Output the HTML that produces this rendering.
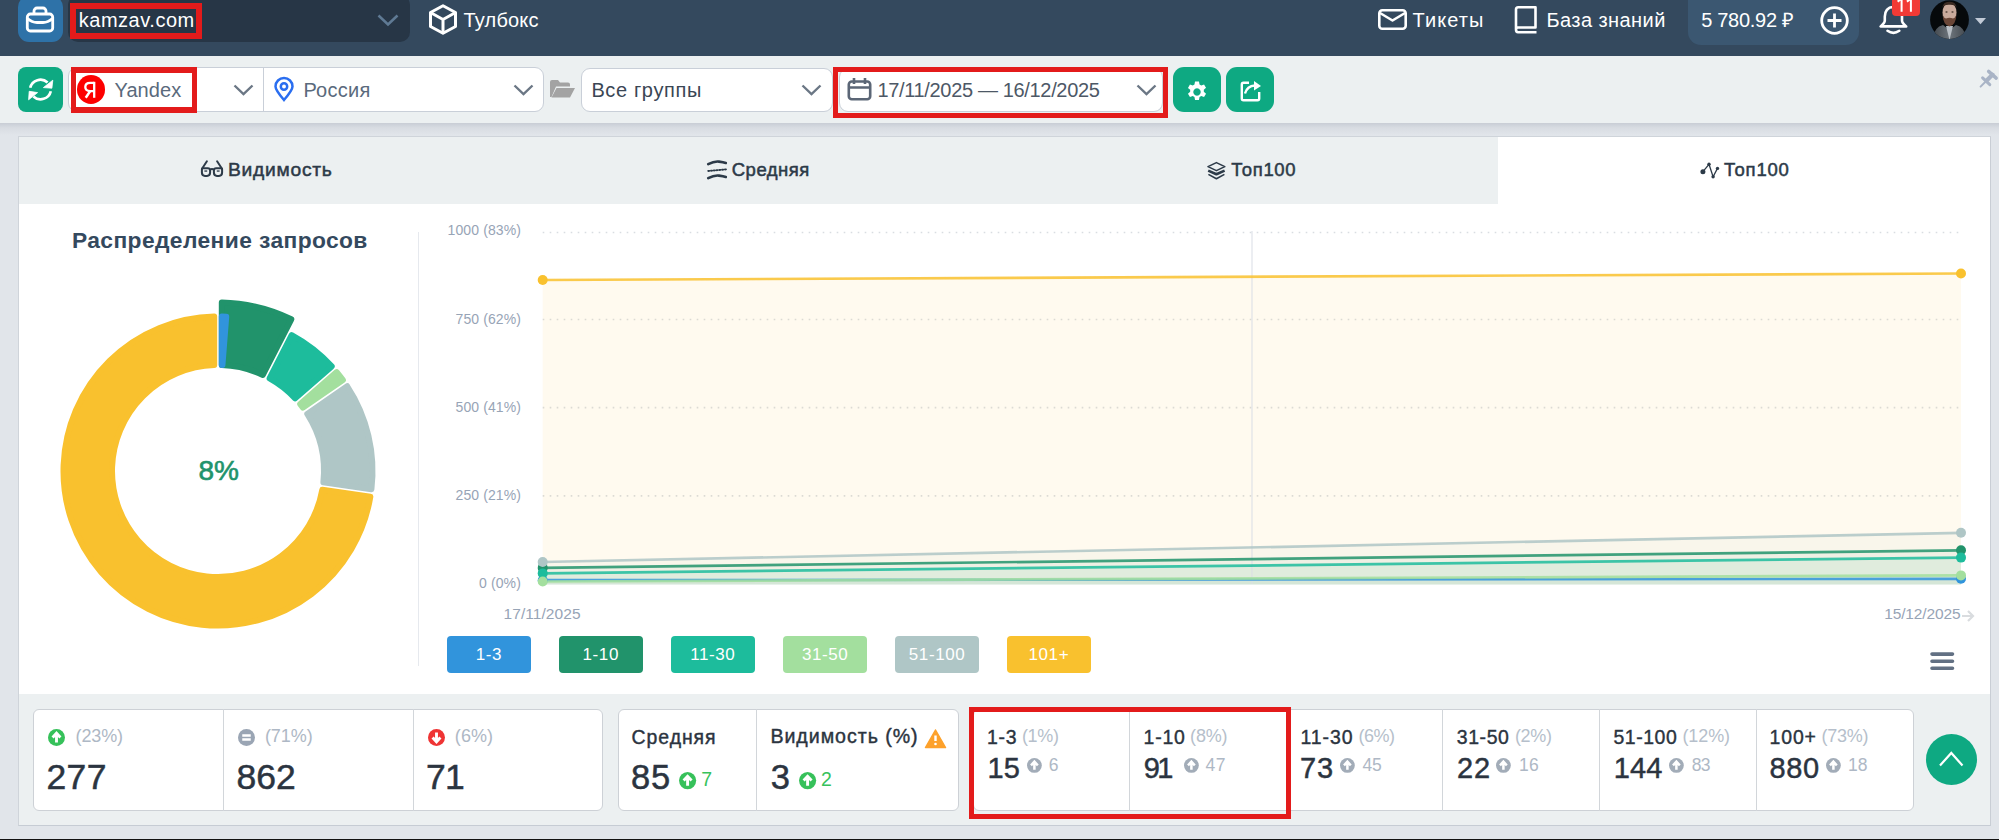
<!DOCTYPE html><html><head><meta charset="utf-8"><style>
html,body{margin:0;padding:0;width:1999px;height:840px;overflow:hidden;position:relative;font-family:"Liberation Sans", sans-serif}
.t{position:absolute;line-height:1;white-space:nowrap}
svg{display:block}
</style></head><body>
<div style="position:absolute;left:0px;top:0px;width:1999px;height:840px;background:#e1e5ea"></div><div style="position:absolute;left:0px;top:0px;width:1999px;height:56px;background:#34495e"></div><div style="position:absolute;left:18px;top:-4px;width:44.5px;height:46px;background:#2e72a8;border-radius:11px"></div><svg style="position:absolute;left:18px;top:0px;overflow:visible" width="44" height="42" viewBox="0 0 44 42"><g fill="none" stroke="#fff" stroke-width="2.8" stroke-linejoin="round" stroke-linecap="round"><rect x="9.3" y="14" width="25.4" height="17" rx="3"/><path d="M16 13.5v-2.5a3 3 0 0 1 3-3h6a3 3 0 0 1 3 3v2.5"/><path d="M9.5 18.5 Q14 22.5 19 22.5 H25 Q30 22.5 34.5 18.5"/></g></svg><div style="position:absolute;left:68px;top:-5px;width:342px;height:46.7px;background:#273646;border-radius:10px"></div><div class="t" style="left:78.7px;top:10.07px;font-size:20px;color:#fff;font-weight:400;letter-spacing:0.533px;">kamzav.com</div><div style="position:absolute;left:70px;top:3px;width:132px;height:36px;border:6px solid #e31b1b;box-sizing:border-box"></div><svg style="position:absolute;left:377px;top:14px;overflow:visible" width="22" height="12" viewBox="0 0 22 12"><path d="M1.5 1.5 L11 10.5 L20.5 1.5" fill="none" stroke="#5f7a94" stroke-width="2.5"/></svg><svg style="position:absolute;left:428px;top:4px;overflow:visible" width="30" height="31" viewBox="0 0 30 31"><g fill="none" stroke="#fff" stroke-width="3" stroke-linejoin="round"><path d="M15 1.8 L27.5 8.5 V22.5 L15 29.2 L2.5 22.5 V8.5 Z"/><path d="M2.5 8.5 L15 15.5 L27.5 8.5 M15 15.5 V29"/></g></svg><div class="t" style="left:463.6px;top:10.07px;font-size:20px;color:#fff;font-weight:400;letter-spacing:0.167px;">Тулбокс</div><svg style="position:absolute;left:1378px;top:9px;overflow:visible" width="29" height="21" viewBox="0 0 29 21"><g fill="none" stroke="#fff" stroke-width="2.6" stroke-linejoin="round"><rect x="1.3" y="1.3" width="26.4" height="18.4" rx="3"/><path d="M2 4 L14.5 11.5 L27 4"/></g></svg><div class="t" style="left:1412.6px;top:10.07px;font-size:20px;color:#fff;font-weight:400;letter-spacing:1.060px;">Тикеты</div><svg style="position:absolute;left:1513px;top:6px;overflow:visible" width="25" height="28" viewBox="0 0 25 28"><g fill="none" stroke="#fff" stroke-width="2.6" stroke-linejoin="round"><path d="M3 23.5 V3.5 Q3 1.3 5.2 1.3 H22.5 V21.5 H5 Q3 21.5 3 23.5 Q3 26.2 5 26.2 H23.5"/></g></svg><div class="t" style="left:1546.4px;top:10.07px;font-size:20px;color:#fff;font-weight:400;letter-spacing:0.440px;">База знаний</div><div style="position:absolute;left:1688px;top:-12px;width:171px;height:56.6px;background:#3b5771;border-radius:13px"></div><div class="t" style="left:1701.2px;top:10.07px;font-size:20px;color:#fff;font-weight:400;letter-spacing:-0.289px;">5 780.92 ₽</div><svg style="position:absolute;left:1820px;top:6px;overflow:visible" width="29" height="29" viewBox="0 0 29 29"><g fill="none" stroke="#fff" stroke-width="2.8"><circle cx="14.5" cy="14.5" r="12.8"/><path d="M14.5 7.5 V21.5 M7.5 14.5 H21.5"/></g></svg><svg style="position:absolute;left:1879px;top:5px;overflow:visible" width="30" height="30" viewBox="0 0 30 30"><g fill="none" stroke="#fff" stroke-width="2.6" stroke-linejoin="round" stroke-linecap="round"><path d="M14.4 2 C8.5 2 5.8 6.5 5.8 11.5 V15.5 C5.8 18 3.5 19.8 1.6 21.4 H27.2 C25.3 19.8 23 18 23 15.5 V11.5 C23 6.5 20.3 2 14.4 2 Z"/><path d="M8.5 25.8 Q14.4 30 20.3 25.8"/></g></svg><div style="position:absolute;left:1892.3px;top:-6px;width:27.7px;height:22.1px;background:#f23a35;border-radius:4px"></div><svg style="position:absolute;left:1892px;top:0px;overflow:visible" width="28" height="14" viewBox="0 0 28 14"><g fill="none" stroke="#fff" stroke-width="2"><path d="M9.6 -3 V11.7 M9.8 -1.5 L5.6 1.6"/><path d="M18.9 -3 V11.7 M19.1 -1.5 L14.9 1.6"/></g></svg><svg style="position:absolute;left:1930px;top:0px;overflow:visible" width="39" height="39.5" viewBox="0 0 39 39.5"><defs><clipPath id="av"><circle cx="19.5" cy="19.7" r="19.4"/></clipPath><linearGradient id="suit" x1="0" y1="0" x2="1" y2="0"><stop offset="0" stop-color="#3d4349"/><stop offset="0.5" stop-color="#6e757c"/><stop offset="1" stop-color="#40464c"/></linearGradient></defs><g clip-path="url(#av)"><rect width="39" height="40" fill="#06090b"/><path d="M2 40 Q4 27 13 25 L19.5 30 L26 25 Q35 27 37 40 Z" fill="url(#suit)"/><path d="M16 26 L19.5 40 L23 26 Z" fill="#b8bec4"/><ellipse cx="19.5" cy="12.5" rx="7" ry="10" fill="#c9aa9c"/><path d="M12.3 8 Q13 1.5 19.5 1.8 Q26 1.5 26.7 8 Q25 4.5 19.5 4.8 Q14 4.5 12.3 8 Z" fill="#3a2a22"/><path d="M12.5 14 Q13 25 19.5 26.5 Q26 25 26.5 14 Q25.5 18 23 18.5 Q19.5 17 16 18.5 Q13.5 18 12.5 14 Z" fill="#6a4637"/><ellipse cx="16.5" cy="12" rx="1.2" ry="0.7" fill="#4a3a32"/><ellipse cx="22.5" cy="12" rx="1.2" ry="0.7" fill="#4a3a32"/></g></svg><svg style="position:absolute;left:1975px;top:18.2px;overflow:visible" width="11" height="6.5" viewBox="0 0 11 6.5"><path d="M0 0 H11 L5.5 6.3 Z" fill="#c2cad6"/></svg><div style="position:absolute;left:0px;top:56px;width:1999px;height:67px;background:#ecf0f1"></div><div style="position:absolute;left:0px;top:123px;width:1999px;height:12px;background:linear-gradient(#c8cdd5,#d8dce2 40%,#e1e5ea)"></div><div style="position:absolute;left:18px;top:67px;width:44.5px;height:45px;background:#0ea982;border-radius:8px"></div><svg style="position:absolute;left:18px;top:67px;overflow:visible" width="44" height="45" viewBox="0 0 44 45"><g fill="none" stroke="#fff" stroke-width="2.7"><path d="M12.2 20.8 A10.5 10.5 0 0 1 29.6 15.6"/><path d="M32.8 24.2 A10.5 10.5 0 0 1 15.4 29.4"/></g><path d="M34.8 13.2 L33.9 21.2 L25.4 20.6 Z M10.6 32.8 L11.2 24.3 L19.6 25.6 Z" fill="#fff" stroke="#fff" stroke-width="0.8" stroke-linejoin="round"/></svg><div style="position:absolute;left:68px;top:67px;width:476px;height:44.5px;background:#fff;border:1px solid #c9cfd8;border-radius:9px;box-sizing:border-box"></div><div style="position:absolute;left:263px;top:67px;width:1.2px;height:44.5px;background:#c9cfd8"></div><div style="position:absolute;left:76.5px;top:75.3px;width:28.3px;height:28.6px;border-radius:50%;background:#fd0000"></div><svg style="position:absolute;left:72px;top:70px;overflow:visible" width="40" height="38" viewBox="0 0 40 38"><g fill="none" stroke="#fff" stroke-width="2.3"><path d="M22.2 11.8 V27.8"/><path d="M22.2 12.9 H18.2 C14.9 12.9 13.3 14.8 13.3 17.1 C13.3 19.6 15 21.1 18.2 21.1 H22.2"/><path d="M18.4 20.9 L13.7 27.8" stroke-width="2.5"/></g></svg><div class="t" style="left:114.5px;top:80.07px;font-size:20px;color:#5a6a7c;font-weight:400;letter-spacing:0.060px;">Yandex</div><svg style="position:absolute;left:233px;top:84px;overflow:visible" width="21" height="12" viewBox="0 0 21 12"><path d="M1.5 1.5 L10.5 10 L19.5 1.5" fill="none" stroke="#6b7785" stroke-width="2.4"/></svg><div style="position:absolute;left:71px;top:67px;width:126px;height:45.5px;border:6px solid #e31b1b;border-left-width:5.3px;border-right-width:5.3px;box-sizing:border-box"></div><svg style="position:absolute;left:274px;top:77px;overflow:visible" width="20" height="25" viewBox="0 0 20 25"><g fill="none" stroke="#2a6ef0" stroke-width="2.5"><path d="M10 23 C4 16 1.5 12.5 1.5 9.5 A8.5 8.5 0 0 1 18.5 9.5 C18.5 12.5 16 16 10 23 Z"/><circle cx="10" cy="9.5" r="3.2"/></g></svg><div class="t" style="left:303.4px;top:80.07px;font-size:20px;color:#5a6a7c;font-weight:400;letter-spacing:0.260px;">Россия</div><svg style="position:absolute;left:513px;top:84px;overflow:visible" width="21" height="12" viewBox="0 0 21 12"><path d="M1.5 1.5 L10.5 10 L19.5 1.5" fill="none" stroke="#6b7785" stroke-width="2.4"/></svg><svg style="position:absolute;left:550px;top:80px;overflow:visible" width="25" height="18" viewBox="0 0 25 18"><path d="M0 2 Q0 0 2 0 H8 L10 2.5 H18 Q20 2.5 20 4.5 V6.5 H6 L1.5 17 H0 Z M6.5 8 H25 L20 17.5 H1.5 Z" fill="#a3a3a3"/></svg><div style="position:absolute;left:581px;top:67.5px;width:251.5px;height:44.5px;background:#fff;border:1px solid #c9cfd8;border-radius:9px;box-sizing:border-box"></div><div class="t" style="left:591.4px;top:80.07px;font-size:20px;color:#3a4654;font-weight:400;letter-spacing:0.633px;">Все группы</div><svg style="position:absolute;left:801px;top:84px;overflow:visible" width="21" height="12" viewBox="0 0 21 12"><path d="M1.5 1.5 L10.5 10 L19.5 1.5" fill="none" stroke="#6b7785" stroke-width="2.4"/></svg><div style="position:absolute;left:839px;top:67.5px;width:324px;height:44.5px;background:#fff;border:1px solid #c9cfd8;border-radius:9px;box-sizing:border-box"></div><svg style="position:absolute;left:847px;top:77px;overflow:visible" width="25" height="24" viewBox="0 0 25 24"><g fill="none" stroke="#5b6676" stroke-width="2.6" stroke-linejoin="round"><rect x="1.8" y="4.5" width="21.4" height="17.7" rx="3"/><path d="M2 10.5 H23 M7 1 V7 M18 1 V7"/></g></svg><div class="t" style="left:877.5px;top:80.07px;font-size:20px;color:#4d5866;font-weight:400;letter-spacing:-0.341px;">17/11/2025 — 16/12/2025</div><svg style="position:absolute;left:1136px;top:84px;overflow:visible" width="21" height="12" viewBox="0 0 21 12"><path d="M1.5 1.5 L10.5 10 L19.5 1.5" fill="none" stroke="#6b7785" stroke-width="2.4"/></svg><div style="position:absolute;left:833px;top:66.5px;width:335px;height:51.5px;border:5px solid #e31b1b;box-sizing:border-box"></div><div style="position:absolute;left:1173px;top:67px;width:47.5px;height:45px;background:#0ea982;border-radius:11px"></div><svg style="position:absolute;left:1186px;top:80.8px;overflow:visible" width="22" height="22" viewBox="0 0 22 22"><g transform="scale(1.1)"><path fill="#fff" fill-rule="evenodd" d="M8.2 0.5h3.6l0.5 2.6 1.6 0.9 2.5-0.9 1.8 3.1-2 1.7v1.9l2 1.7-1.8 3.1-2.5-0.9-1.6 0.9-0.5 2.6H8.2l-0.5-2.6-1.6-0.9-2.5 0.9-1.8-3.1 2-1.7V8l-2-1.7 1.8-3.1 2.5 0.9 1.6-0.9z M10 6.6a3.4 3.4 0 1 0 0.01 0z"/></g></svg><div style="position:absolute;left:1226px;top:67px;width:48px;height:45px;background:#0ea982;border-radius:11px"></div><svg style="position:absolute;left:1240px;top:81px;overflow:visible" width="22" height="21" viewBox="0 0 22 21"><g fill="none" stroke="#fff" stroke-width="2.4" stroke-linejoin="round"><path d="M9 1.8 H3.5 Q1.8 1.8 1.8 3.5 V17.5 Q1.8 19.2 3.5 19.2 H17.5 Q19.2 19.2 19.2 17.5 V11"/><path d="M5 12.5 Q7 5 15 4.5"/></g><path d="M14 0 L21 5 L14 9.5 Z" fill="#fff"/></svg><svg style="position:absolute;left:1978px;top:68px;overflow:visible" width="21" height="21" viewBox="0 0 21 21"><g stroke="#a9b4c6" stroke-linecap="round" fill="none"><path d="M10.6 3.4 L18.2 10.1" stroke-width="3.4"/><path d="M14.4 6.8 L8.7 12.5" stroke-width="4.2"/><path d="M4.6 9.8 L11.8 16.6" stroke-width="3"/><path d="M8.2 13 L2.6 18.6" stroke-width="2"/></g></svg><div style="position:absolute;left:18px;top:136px;width:1973px;height:690px;background:#ecf0f1;border:1px solid #cfd4da;border-right-color:#c9ced5;border-bottom-color:#c6ccd4;box-sizing:border-box"></div><div style="position:absolute;left:1498px;top:137px;width:492px;height:67px;background:#fff"></div><div style="position:absolute;left:19px;top:204px;width:1971px;height:490px;background:#fff"></div><svg style="position:absolute;left:196px;top:156px;overflow:visible" width="32" height="24" viewBox="0 0 32 24"><g fill="none" stroke="#2c3a48" stroke-width="2" stroke-linecap="round" stroke-linejoin="round"><path d="M5.9 13.2 Q5.9 12.2 7.2 12.2 H11.8 Q14.1 12.2 14.1 14.6 V16.6 Q14.1 19.9 11 19.9 H9 Q5.9 19.9 5.9 16.6 Z"/><path d="M26.1 13.2 Q26.1 12.2 24.8 12.2 H20.2 Q17.9 12.2 17.9 14.6 V16.6 Q17.9 19.9 21 19.9 H23 Q26.1 19.9 26.1 16.6 Z"/><path d="M14.1 13.6 Q16 12.2 17.9 13.6 M6 12.8 L10.9 5.3 M26 12.8 L21.1 5.3"/></g><g fill="#2c3a48"><rect x="8.4" y="14.4" width="2.8" height="1.3"/><rect x="20.8" y="14.4" width="2.8" height="1.3"/></g></svg><div class="t" style="left:228.0px;top:160.21px;font-size:19.24px;color:#2c3a48;font-weight:400;letter-spacing:0.738px;-webkit-text-stroke:0.5px #2c3a48;">Видимость</div><svg style="position:absolute;left:706px;top:160px;overflow:visible" width="22" height="20" viewBox="0 0 22 20"><g fill="none" stroke="#2c3a48" stroke-linecap="round"><path d="M2.2 4.2 C6 2.2 10 1.2 13 1.6 C16 2 18 2.4 19.8 3" stroke-width="2.6"/><path d="M2.2 11 L20 9.4" stroke-width="1.8" stroke-dasharray="1.2 1.6"/><path d="M2.2 18.2 C6 16.2 10 15.2 13 15.6 C16 16 18 16.4 19.8 17" stroke-width="2.6"/></g></svg><div class="t" style="left:731.8px;top:160.94px;font-size:18.5px;color:#2c3a48;font-weight:400;letter-spacing:0.467px;-webkit-text-stroke:0.5px #2c3a48;">Средняя</div><svg style="position:absolute;left:1195px;top:150px;overflow:visible" width="36" height="36" viewBox="0 0 36 36"><g fill="none" stroke="#2c3a48" stroke-linejoin="round"><path d="M21.4 12.6 L29.8 16.6 L21.4 20.6 L13 16.6 Z" stroke-width="1.6"/><path d="M13.2 20.6 L21.4 24.2 L29.6 20.6" stroke-width="2.6"/><path d="M13.4 24.4 L21.4 28.8 L29.4 24.4" stroke-width="1.6"/></g></svg><div class="t" style="left:1231.2px;top:161.14px;font-size:18.5px;color:#2c3a48;font-weight:400;letter-spacing:0.680px;-webkit-text-stroke:0.5px #2c3a48;">Топ100</div><svg style="position:absolute;left:1690px;top:150px;overflow:visible" width="30" height="30" viewBox="0 0 30 30"><g fill="#2c3a48"><path d="M12.9 21.7 L19 14.3 L23.1 26.7 L27.5 18.4" fill="none" stroke="#2c3a48" stroke-width="1.3" stroke-linejoin="round"/><circle cx="12.9" cy="21.7" r="2.5"/><circle cx="19" cy="14.3" r="1.7"/><circle cx="23.1" cy="26.7" r="1.7"/><circle cx="27.5" cy="18.4" r="1.7"/></g></svg><div class="t" style="left:1724.0px;top:161.04px;font-size:18.5px;color:#2c3a48;font-weight:400;letter-spacing:0.740px;-webkit-text-stroke:0.5px #2c3a48;">Топ100</div><div class="t" style="left:72.0px;top:229.10px;font-size:22.8px;color:#34495e;font-weight:700;letter-spacing:0.395px;">Распределение запросов</div><div style="position:absolute;left:417.5px;top:232px;width:1px;height:434px;background:#e6e9ee"></div><svg style="position:absolute;left:0;top:0" width="420" height="700"><path d="M221.80 365.07 L221.80 302.54 A168.5 168.5 0 0 1 291.29 319.27 L262.83 374.95 A106.0 106.0 0 0 0 221.80 365.07 Z" fill="#21936b" stroke="#21936b" stroke-width="6.0" stroke-linejoin="round"/><path d="M269.60 378.41 L291.68 335.20 A154.5 154.5 0 0 1 331.70 366.39 L295.19 398.36 A106.0 106.0 0 0 0 269.60 378.41 Z" fill="#1dbc9c" stroke="#1dbc9c" stroke-width="6.0" stroke-linejoin="round"/><path d="M300.20 404.07 L336.70 372.11 A154.5 154.5 0 0 1 342.88 380.03 L302.97 407.63 A106.0 106.0 0 0 0 300.20 404.07 Z" fill="#a3df9e" stroke="#a3df9e" stroke-width="6.0" stroke-linejoin="round"/><path d="M307.29 413.88 L347.20 386.28 A154.5 154.5 0 0 1 371.42 489.22 L323.39 482.31 A106.0 106.0 0 0 0 307.29 413.88 Z" fill="#afc6c6" stroke="#afc6c6" stroke-width="6.0" stroke-linejoin="round"/><path d="M322.31 489.84 L370.34 496.74 A154.5 154.5 0 1 1 214.20 316.55 L214.20 365.07 A106.0 106.0 0 1 0 322.31 489.84 Z" fill="#f9c12e" stroke="#f9c12e" stroke-width="6.0" stroke-linejoin="round"/><path d="M221.80 365.07 L221.80 316.55 A154.5 154.5 0 0 1 226.23 316.72 L222.45 365.09 A106.0 106.0 0 0 0 221.80 365.07 Z" fill="#3194dc" stroke="#3194dc" stroke-width="6.0" stroke-linejoin="round"/></svg><div class="t" style="left:198.4px;top:457.30px;font-size:28px;color:#21936b;font-weight:400;letter-spacing:0.000px;-webkit-text-stroke:0.6px #21936b;">8%</div><svg style="position:absolute;left:0;top:0" width="1999" height="700"><line x1="542.7" y1="232.5" x2="1961" y2="232.5" stroke="#d9dde2" stroke-width="1.6" stroke-dasharray="1.6 5.4"/><line x1="542.7" y1="319.5" x2="1961" y2="319.5" stroke="#d9dde2" stroke-width="1.6" stroke-dasharray="1.6 5.4"/><line x1="542.7" y1="407.6" x2="1961" y2="407.6" stroke="#d9dde2" stroke-width="1.6" stroke-dasharray="1.6 5.4"/><line x1="542.7" y1="495.9" x2="1961" y2="495.9" stroke="#d9dde2" stroke-width="1.6" stroke-dasharray="1.6 5.4"/><path d="M542.7 580.2 L1961 578.8 L1961 584.5 L542.7 584.5 Z" fill="#3194dc" fill-opacity="0.05"/><path d="M542.7 567.9 L1961 550.3 L1961 584.5 L542.7 584.5 Z" fill="#21936b" fill-opacity="0.05"/><path d="M542.7 573.4 L1961 557.6 L1961 584.5 L542.7 584.5 Z" fill="#1dbc9c" fill-opacity="0.08"/><path d="M542.7 581.5 L1961 575.4 L1961 584.5 L542.7 584.5 Z" fill="#a3df9e" fill-opacity="0.05"/><path d="M542.7 562.0 L1961 532.8 L1961 584.5 L542.7 584.5 Z" fill="#afc6c6" fill-opacity="0.07"/><path d="M542.7 280.0 L1961 273.5 L1961 584.5 L542.7 584.5 Z" fill="#f9c12e" fill-opacity="0.08"/><line x1="1252" y1="231" x2="1252" y2="584" stroke="#d9dde5" stroke-width="1"/><path d="M542.7 580.2 L1961 578.8" stroke="#3194dc" stroke-width="2.7" stroke-opacity="0.85" fill="none"/><path d="M542.7 567.9 L1961 550.3" stroke="#21936b" stroke-width="2.7" stroke-opacity="0.85" fill="none"/><path d="M542.7 573.4 L1961 557.6" stroke="#1dbc9c" stroke-width="2.7" stroke-opacity="0.85" fill="none"/><path d="M542.7 581.5 L1961 575.4" stroke="#a3df9e" stroke-width="2.7" stroke-opacity="0.85" fill="none"/><path d="M542.7 562.0 L1961 532.8" stroke="#afc6c6" stroke-width="2.7" stroke-opacity="0.85" fill="none"/><path d="M542.7 280.0 L1961 273.5" stroke="#f9c12e" stroke-width="2.7" stroke-opacity="0.85" fill="none"/><circle cx="542.7" cy="580.2" r="5" fill="#3194dc"/><circle cx="1961" cy="578.8" r="5" fill="#3194dc"/><circle cx="542.7" cy="567.9" r="5" fill="#21936b"/><circle cx="1961" cy="550.3" r="5" fill="#21936b"/><circle cx="542.7" cy="573.4" r="5" fill="#1dbc9c"/><circle cx="1961" cy="557.6" r="5" fill="#1dbc9c"/><circle cx="542.7" cy="581.5" r="5" fill="#a3df9e"/><circle cx="1961" cy="575.4" r="5" fill="#a3df9e"/><circle cx="542.7" cy="562.0" r="5" fill="#afc6c6"/><circle cx="1961" cy="532.8" r="5" fill="#afc6c6"/><circle cx="542.7" cy="280.0" r="5" fill="#f9c12e"/><circle cx="1961" cy="273.5" r="5" fill="#f9c12e"/></svg><div class="t" style="left:447.6px;top:223.35px;font-size:14px;color:#97a4b6;font-weight:400;letter-spacing:0.100px;">1000 (83%)</div><div class="t" style="left:455.5px;top:311.65px;font-size:14px;color:#97a4b6;font-weight:400;letter-spacing:0.100px;">750 (62%)</div><div class="t" style="left:455.5px;top:399.95px;font-size:14px;color:#97a4b6;font-weight:400;letter-spacing:0.100px;">500 (41%)</div><div class="t" style="left:455.5px;top:488.25px;font-size:14px;color:#97a4b6;font-weight:400;letter-spacing:0.100px;">250 (21%)</div><div class="t" style="left:479.1px;top:576.15px;font-size:14px;color:#97a4b6;font-weight:400;letter-spacing:0.100px;">0 (0%)</div><div class="t" style="left:503.6px;top:605.68px;font-size:15.5px;color:#97a4b6;font-weight:400;letter-spacing:0.056px;">17/11/2025</div><div class="t" style="left:1884.2px;top:605.68px;font-size:15.5px;color:#97a4b6;font-weight:400;letter-spacing:-0.133px;">15/12/2025</div><svg style="position:absolute;left:1961px;top:609px;overflow:visible" width="14" height="14" viewBox="0 0 14 14"><path d="M1 7 H12 M7 2 L12 7 L7 12" fill="none" stroke="#d9dcdf" stroke-width="2.2"/></svg><div style="position:absolute;left:446.7px;top:636.4px;width:84.2px;height:36.5px;background:#3194dc;border-radius:4px"></div><div class="t" style="left:475.65px;top:646.31px;font-size:17px;color:#fff;font-weight:400;letter-spacing:0.600px;">1-3</div><div style="position:absolute;left:558.7px;top:636.4px;width:84.2px;height:36.5px;background:#21936b;border-radius:4px"></div><div class="t" style="left:582.55px;top:646.31px;font-size:17px;color:#fff;font-weight:400;letter-spacing:0.600px;">1-10</div><div style="position:absolute;left:670.7px;top:636.4px;width:84.2px;height:36.5px;background:#1dbc9c;border-radius:4px"></div><div class="t" style="left:690.15px;top:646.31px;font-size:17px;color:#fff;font-weight:400;letter-spacing:0.600px;">11-30</div><div style="position:absolute;left:782.7px;top:636.4px;width:84.2px;height:36.5px;background:#a3df9e;border-radius:4px"></div><div class="t" style="left:801.9px;top:646.31px;font-size:17px;color:#fff;font-weight:400;letter-spacing:0.600px;">31-50</div><div style="position:absolute;left:894.7px;top:636.4px;width:84.2px;height:36.5px;background:#afc6c6;border-radius:4px"></div><div class="t" style="left:908.8px;top:646.31px;font-size:17px;color:#fff;font-weight:400;letter-spacing:0.600px;">51-100</div><div style="position:absolute;left:1006.7px;top:636.4px;width:84.2px;height:36.5px;background:#f9c12e;border-radius:4px"></div><div class="t" style="left:1028.5px;top:646.31px;font-size:17px;color:#fff;font-weight:400;letter-spacing:0.600px;">101+</div><svg style="position:absolute;left:1930px;top:651px;overflow:visible" width="25" height="20" viewBox="0 0 25 20"><g stroke="#627083" stroke-width="3.6" stroke-linecap="round"><path d="M2 3.1 H22.5 M2 10.3 H22.5 M2 17.3 H22.5"/></g></svg><div style="position:absolute;left:33px;top:709px;width:570px;height:101.5px;background:#fff;border:1px solid #cdd1d6;border-radius:6px;box-sizing:border-box"></div><div style="position:absolute;left:222.5px;top:709px;width:1px;height:101.5px;background:#d2d6da"></div><div style="position:absolute;left:413px;top:709px;width:1px;height:101.5px;background:#d2d6da"></div><svg style="position:absolute;left:47.8px;top:728.8px;overflow:visible" width="17" height="17" viewBox="0 0 17 17"><circle cx="8.5" cy="8.5" r="8.5" fill="#36c15a"/><path d="M8.5 13.600000000000001 V5.1 M4.59 8.5 L8.5 4.25 L12.41 8.5" fill="none" stroke="#fff" stroke-width="2.89" stroke-linejoin="miter"/></svg><div class="t" style="left:75.6px;top:727.26px;font-size:18px;color:#aeb8c5;font-weight:400;letter-spacing:-0.125px;">(23%)</div><div class="t" style="left:46.5px;top:759.95px;font-size:35.5px;color:#2b3440;font-weight:400;letter-spacing:0.350px;-webkit-text-stroke:0.5px #2b3440;">277</div><svg style="position:absolute;left:237.8px;top:728.8px;overflow:visible" width="17" height="17" viewBox="0 0 17 17"><circle cx="8.5" cy="8.5" r="8.5" fill="#9aa5b4"/><path d="M4.25 6.46 H12.75 M4.25 10.54 H12.75" stroke="#fff" stroke-width="2.55"/></svg><div class="t" style="left:264.9px;top:727.26px;font-size:18px;color:#aeb8c5;font-weight:400;letter-spacing:-0.050px;">(71%)</div><div class="t" style="left:236.5px;top:759.95px;font-size:35.5px;color:#2b3440;font-weight:400;-webkit-text-stroke:0.5px #2b3440;">862</div><svg style="position:absolute;left:427.8px;top:728.8px;overflow:visible" width="17" height="17" viewBox="0 0 17 17"><circle cx="8.5" cy="8.5" r="8.5" fill="#ef3434"/><path d="M8.5 3.4000000000000004 V11.899999999999999 M4.59 8.5 L8.5 12.75 L12.41 8.5" fill="none" stroke="#fff" stroke-width="2.89"/></svg><div class="t" style="left:454.8px;top:727.26px;font-size:18px;color:#aeb8c5;font-weight:400;letter-spacing:0.100px;">(6%)</div><div class="t" style="left:426.1px;top:759.95px;font-size:35.5px;color:#2b3440;font-weight:400;letter-spacing:-0.900px;-webkit-text-stroke:0.5px #2b3440;">71</div><div style="position:absolute;left:617.5px;top:709px;width:341.5px;height:101.5px;background:#fff;border:1px solid #cdd1d6;border-radius:6px;box-sizing:border-box"></div><div style="position:absolute;left:756px;top:709px;width:1px;height:101.5px;background:#d2d6da"></div><div class="t" style="left:631.6px;top:728.05px;font-size:19.43px;color:#2b3440;font-weight:400;letter-spacing:0.950px;-webkit-text-stroke:0.4px #2b3440;">Средняя</div><div class="t" style="left:631.1px;top:760.00px;font-size:34.5px;color:#2b3440;font-weight:400;letter-spacing:0.800px;-webkit-text-stroke:0.5px #2b3440;">85</div><svg style="position:absolute;left:678.8px;top:771.6px;overflow:visible" width="17.2" height="17.2" viewBox="0 0 17.2 17.2"><circle cx="8.6" cy="8.6" r="8.6" fill="#36c15a"/><path d="M8.6 13.76 V5.159999999999999 M4.644 8.6 L8.6 4.3 L12.556 8.6" fill="none" stroke="#fff" stroke-width="2.92" stroke-linejoin="miter"/></svg><div class="t" style="left:701.3px;top:770.29px;font-size:19.5px;color:#37c25c;font-weight:400;">7</div><div class="t" style="left:770.4px;top:727.00px;font-size:19.61px;color:#2b3440;font-weight:400;letter-spacing:0.958px;-webkit-text-stroke:0.4px #2b3440;">Видимость (%)</div><svg style="position:absolute;left:925px;top:728.5px;overflow:visible" width="21" height="19" viewBox="0 0 21 19"><path d="M10.5 1 L20.5 18.5 H0.5 Z" fill="#fda12b" stroke="#fda12b" stroke-width="1.5" stroke-linejoin="round"/><path d="M10.5 6.5 V12" stroke="#fff" stroke-width="2.4"/><circle cx="10.5" cy="15" r="1.3" fill="#fff"/></svg><div class="t" style="left:770.7px;top:760.10px;font-size:34.5px;color:#2b3440;font-weight:400;-webkit-text-stroke:0.5px #2b3440;">3</div><svg style="position:absolute;left:799.0px;top:771.8px;overflow:visible" width="17.2" height="17.2" viewBox="0 0 17.2 17.2"><circle cx="8.6" cy="8.6" r="8.6" fill="#36c15a"/><path d="M8.6 13.76 V5.159999999999999 M4.644 8.6 L8.6 4.3 L12.556 8.6" fill="none" stroke="#fff" stroke-width="2.92" stroke-linejoin="miter"/></svg><div class="t" style="left:821.0px;top:770.09px;font-size:19.5px;color:#37c25c;font-weight:400;">2</div><div style="position:absolute;left:973px;top:709px;width:940.5px;height:101.5px;background:#fff;border:1px solid #cdd1d6;border-radius:6px;box-sizing:border-box"></div><div class="t" style="left:987.1px;top:727.55px;font-size:19.43px;color:#2b3440;font-weight:400;letter-spacing:0.650px;-webkit-text-stroke:0.4px #2b3440;">1-3</div><div class="t" style="left:1021.9px;top:726.56px;font-size:18px;color:#b6bfcb;font-weight:400;letter-spacing:-0.267px;">(1%)</div><div class="t" style="left:987.55px;top:753.95px;font-size:29px;color:#2b3440;font-weight:400;letter-spacing:-0.050px;-webkit-text-stroke:0.45px #2b3440;">15</div><svg style="position:absolute;left:1027.0px;top:758.2px;overflow:visible" width="14.8" height="14.8" viewBox="0 0 14.8 14.8"><circle cx="7.4" cy="7.4" r="7.4" fill="#a2acb8"/><path d="M7.4 11.840000000000002 V4.44 M3.9960000000000004 7.4 L7.4 3.7 L10.804 7.4" fill="none" stroke="#fff" stroke-width="2.52" stroke-linejoin="miter"/></svg><div class="t" style="left:1048.85px;top:756.79px;font-size:17.5px;color:#aeb8c5;font-weight:400;">6</div><div style="position:absolute;left:1128.88px;top:709px;width:1px;height:101.5px;background:#d2d6da"></div><div class="t" style="left:1143.5px;top:727.55px;font-size:19.43px;color:#2b3440;font-weight:400;letter-spacing:0.833px;-webkit-text-stroke:0.4px #2b3440;">1-10</div><div class="t" style="left:1190.1px;top:726.56px;font-size:18px;color:#b6bfcb;font-weight:400;letter-spacing:-0.167px;">(8%)</div><div class="t" style="left:1143.7px;top:753.95px;font-size:29px;color:#2b3440;font-weight:400;letter-spacing:-2.500px;-webkit-text-stroke:0.45px #2b3440;">91</div><svg style="position:absolute;left:1183.5px;top:758.2px;overflow:visible" width="14.8" height="14.8" viewBox="0 0 14.8 14.8"><circle cx="7.4" cy="7.4" r="7.4" fill="#a2acb8"/><path d="M7.4 11.840000000000002 V4.44 M3.9960000000000004 7.4 L7.4 3.7 L10.804 7.4" fill="none" stroke="#fff" stroke-width="2.52" stroke-linejoin="miter"/></svg><div class="t" style="left:1205.5px;top:756.79px;font-size:17.5px;color:#aeb8c5;font-weight:400;letter-spacing:0.400px;">47</div><div style="position:absolute;left:1285.66px;top:709px;width:1px;height:101.5px;background:#d2d6da"></div><div class="t" style="left:1300.5px;top:727.55px;font-size:19.43px;color:#2b3440;font-weight:400;letter-spacing:0.925px;-webkit-text-stroke:0.4px #2b3440;">11-30</div><div class="t" style="left:1358.4px;top:726.56px;font-size:18px;color:#b6bfcb;font-weight:400;letter-spacing:-0.433px;">(6%)</div><div class="t" style="left:1300.1px;top:753.95px;font-size:29px;color:#2b3440;font-weight:400;letter-spacing:0.900px;-webkit-text-stroke:0.45px #2b3440;">73</div><svg style="position:absolute;left:1340.1999999999998px;top:758.2px;overflow:visible" width="14.8" height="14.8" viewBox="0 0 14.8 14.8"><circle cx="7.4" cy="7.4" r="7.4" fill="#a2acb8"/><path d="M7.4 11.840000000000002 V4.44 M3.9960000000000004 7.4 L7.4 3.7 L10.804 7.4" fill="none" stroke="#fff" stroke-width="2.52" stroke-linejoin="miter"/></svg><div class="t" style="left:1362.4px;top:756.79px;font-size:17.5px;color:#aeb8c5;font-weight:400;letter-spacing:-0.100px;">45</div><div style="position:absolute;left:1442.44px;top:709px;width:1px;height:101.5px;background:#d2d6da"></div><div class="t" style="left:1456.8px;top:727.55px;font-size:19.43px;color:#2b3440;font-weight:400;letter-spacing:0.600px;-webkit-text-stroke:0.4px #2b3440;">31-50</div><div class="t" style="left:1514.9px;top:726.56px;font-size:18px;color:#b6bfcb;font-weight:400;letter-spacing:-0.333px;">(2%)</div><div class="t" style="left:1457.0px;top:753.95px;font-size:29px;color:#2b3440;font-weight:400;letter-spacing:0.950px;-webkit-text-stroke:0.45px #2b3440;">22</div><svg style="position:absolute;left:1496.3px;top:758.2px;overflow:visible" width="14.8" height="14.8" viewBox="0 0 14.8 14.8"><circle cx="7.4" cy="7.4" r="7.4" fill="#a2acb8"/><path d="M7.4 11.840000000000002 V4.44 M3.9960000000000004 7.4 L7.4 3.7 L10.804 7.4" fill="none" stroke="#fff" stroke-width="2.52" stroke-linejoin="miter"/></svg><div class="t" style="left:1519.1px;top:756.79px;font-size:17.5px;color:#aeb8c5;font-weight:400;letter-spacing:0.100px;">16</div><div style="position:absolute;left:1599.22px;top:709px;width:1px;height:101.5px;background:#d2d6da"></div><div class="t" style="left:1613.5px;top:727.55px;font-size:19.43px;color:#2b3440;font-weight:400;letter-spacing:0.560px;-webkit-text-stroke:0.4px #2b3440;">51-100</div><div class="t" style="left:1682.4px;top:726.56px;font-size:18px;color:#b6bfcb;font-weight:400;letter-spacing:-0.075px;">(12%)</div><div class="t" style="left:1613.8px;top:753.95px;font-size:29px;color:#2b3440;font-weight:400;letter-spacing:0.100px;-webkit-text-stroke:0.45px #2b3440;">144</div><svg style="position:absolute;left:1669.1999999999998px;top:758.2px;overflow:visible" width="14.8" height="14.8" viewBox="0 0 14.8 14.8"><circle cx="7.4" cy="7.4" r="7.4" fill="#a2acb8"/><path d="M7.4 11.840000000000002 V4.44 M3.9960000000000004 7.4 L7.4 3.7 L10.804 7.4" fill="none" stroke="#fff" stroke-width="2.52" stroke-linejoin="miter"/></svg><div class="t" style="left:1691.7px;top:756.79px;font-size:17.5px;color:#aeb8c5;font-weight:400;letter-spacing:-0.600px;">83</div><div style="position:absolute;left:1756.0px;top:709px;width:1px;height:101.5px;background:#d2d6da"></div><div class="t" style="left:1769.5px;top:727.55px;font-size:19.43px;color:#2b3440;font-weight:400;letter-spacing:0.900px;-webkit-text-stroke:0.4px #2b3440;">100+</div><div class="t" style="left:1821.4px;top:726.56px;font-size:18px;color:#b6bfcb;font-weight:400;letter-spacing:-0.200px;">(73%)</div><div class="t" style="left:1769.6px;top:753.95px;font-size:29px;color:#2b3440;font-weight:400;letter-spacing:0.550px;-webkit-text-stroke:0.45px #2b3440;">880</div><svg style="position:absolute;left:1825.6px;top:758.2px;overflow:visible" width="14.8" height="14.8" viewBox="0 0 14.8 14.8"><circle cx="7.4" cy="7.4" r="7.4" fill="#a2acb8"/><path d="M7.4 11.840000000000002 V4.44 M3.9960000000000004 7.4 L7.4 3.7 L10.804 7.4" fill="none" stroke="#fff" stroke-width="2.52" stroke-linejoin="miter"/></svg><div class="t" style="left:1847.9px;top:756.79px;font-size:17.5px;color:#aeb8c5;font-weight:400;letter-spacing:0.100px;">18</div><div style="position:absolute;left:969px;top:706.5px;width:322px;height:112.5px;border:5.5px solid #e31b1b;box-sizing:border-box"></div><div style="position:absolute;left:1925.8px;top:734.2px;width:51px;height:51px;border-radius:50%;background:#0ea982"></div><svg style="position:absolute;left:1939px;top:751px;overflow:visible" width="25" height="16" viewBox="0 0 25 16"><path d="M1 14.5 L12.3 2 L23.5 14.5" fill="none" stroke="#fff" stroke-width="2.2"/></svg><div style="position:absolute;left:0px;top:838.5px;width:1999px;height:2px;background:#111"></div>
</body></html>
